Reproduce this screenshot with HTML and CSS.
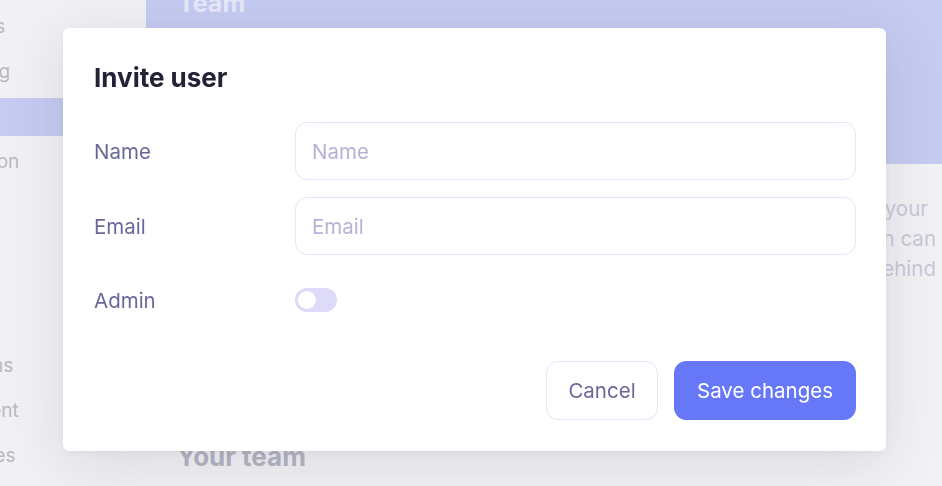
FILE: index.html
```html
<!DOCTYPE html>
<html lang="en">
<head>
<meta charset="utf-8">
<title>Invite user</title>
<link rel="stylesheet" href="styles.css">
</head>
<body>
<div class="page">
  <aside class="sidebar">
    <nav class="nav">
      <div class="nav-item">Analytics</div>
      <div class="nav-item">Reporting</div>
      <div class="nav-item active">Team</div>
      <div class="nav-item">Integration</div>
      <div class="nav-item section">Questions</div>
      <div class="nav-item">Equipment</div>
      <div class="nav-item">Templates</div>
    </nav>
  </aside>
  <main class="main">
    <header class="hero">
      <h1 class="hero-title">Team</h1>
    </header>
    <div class="intro">
      <div class="intro-line first">Invite people to collaborate with your</div>
      <div class="intro-line">team. Anyone who is invited in can</div>
      <div class="intro-line">see everything happening behind</div>
    </div>
    <h2 class="section-title">Your team</h2>
  </main>
</div>

<div class="backdrop">
  <div class="modal" role="dialog" aria-labelledby="invite-title">
    <h2 class="modal-title" id="invite-title">Invite user</h2>
    <div class="form">
      <label class="field-label" for="name">Name</label>
      <input class="field-input" id="name" type="text" placeholder="Name">
      <label class="field-label" for="email">Email</label>
      <input class="field-input" id="email" type="email" placeholder="Email">
      <span class="field-label admin-label">Admin</span>
      <div class="toggle-cell">
        <span class="toggle"><span class="knob"></span></span>
      </div>
    </div>
    <div class="actions">
      <button class="btn btn-secondary" type="button">Cancel</button>
      <button class="btn btn-primary" type="button">Save changes</button>
    </div>
  </div>
</div>
</body>
</html>
```

FILE: styles.css
```css
* {
  box-sizing: border-box;
}

html, body {
  margin: 0;
  height: 100%;
  overflow: hidden;
}

body {
  font-family: Inter, "Noto Sans", sans-serif;
  background: #f1f1f4;
}

.page {
  display: flex;
  height: 486px;
}

.sidebar {
  width: 146px;
  flex: none;
  background: #f1f1f4;
  overflow: hidden;
}

.nav {
  display: flex;
  flex-direction: column;
  gap: 7px;
  padding-top: 8px;
}

.nav-item {
  height: 38px;
  line-height: 38px;
  font-size: 19px;
  color: #b8b8c2;
  text-indent: -77px;
  white-space: nowrap;
}

.nav-item.active {
  background: #c6cbf1;
  color: #c6cbf1;
}

.nav-item.section {
  margin-top: 159px;
}

.main {
  flex: 1;
  background: #f2f2f4;
  overflow: hidden;
}

.hero {
  display: flow-root;
  height: 164px;
  background: #c6cbf1;
  padding: 0 32px;
}

.hero-title {
  margin: -12px 0 0;
  font-size: 25px;
  line-height: 30px;
  font-weight: 700;
  color: #e7e9fa;
}

.intro {
  margin-top: 30px;
  padding-right: 6px;
  font-size: 20.5px;
  line-height: 30px;
  color: #c9c8d8;
  text-align: right;
}

.intro-line {
  white-space: nowrap;
}

.intro-line.first {
  padding-right: 8px;
}

.section-title {
  margin: 158px 0 0;
  padding-left: 31px;
  font-size: 26px;
  line-height: 30px;
  font-weight: 700;
  color: #b5b5c1;
}

.backdrop {
  position: fixed;
  inset: 0;
  padding: 28px 56px 0 63px;
}

.modal {
  width: 823px;
  height: 423px;
  background: #ffffff;
  border-radius: 6px;
  padding: 34px 30px 31px 31px;
  display: flex;
  flex-direction: column;
  box-shadow: 0 12px 60px rgba(40, 40, 80, 0.12), 0 2px 8px rgba(40, 40, 80, 0.05);
}

.modal-title {
  margin: 0;
  font-size: 26px;
  line-height: 32px;
  font-weight: 700;
  color: #232338;
}

.form {
  margin-top: 28px;
  display: grid;
  grid-template-columns: 201px 1fr;
  grid-auto-rows: 58px 58px 56px;
  row-gap: 17px;
  align-items: center;
}

.field-label {
  font-size: 20.5px;
  color: #6a689b;
}

.field-input {
  height: 58px;
  width: 100%;
  border: 1px solid #e6e4fb;
  border-radius: 12px;
  padding: 0 16px;
  font-family: inherit;
  font-size: 20.5px;
  color: #232338;
  background: #ffffff;
  outline: none;
}

.field-input::placeholder {
  color: #b4b2d6;
}

.toggle-cell {
  display: flex;
  align-items: center;
}

.toggle {
  width: 42px;
  height: 24px;
  border-radius: 12px;
  background: #dddbf7;
  display: flex;
  align-items: center;
  padding-left: 3px;
}

.knob {
  width: 18px;
  height: 18px;
  border-radius: 50%;
  background: #ffffff;
}

.actions {
  margin-top: auto;
  display: flex;
  justify-content: flex-end;
  gap: 16px;
}

.btn {
  height: 59px;
  border-radius: 12px;
  font-family: inherit;
  font-size: 20.5px;
  padding: 0;
  cursor: pointer;
}

.btn-secondary {
  width: 112px;
  background: #ffffff;
  border: 1px solid #e6e4fb;
  color: #6a689b;
}

.btn-primary {
  width: 182px;
  background: #6678f7;
  border: 1px solid #6678f7;
  color: #ffffff;
}
```
